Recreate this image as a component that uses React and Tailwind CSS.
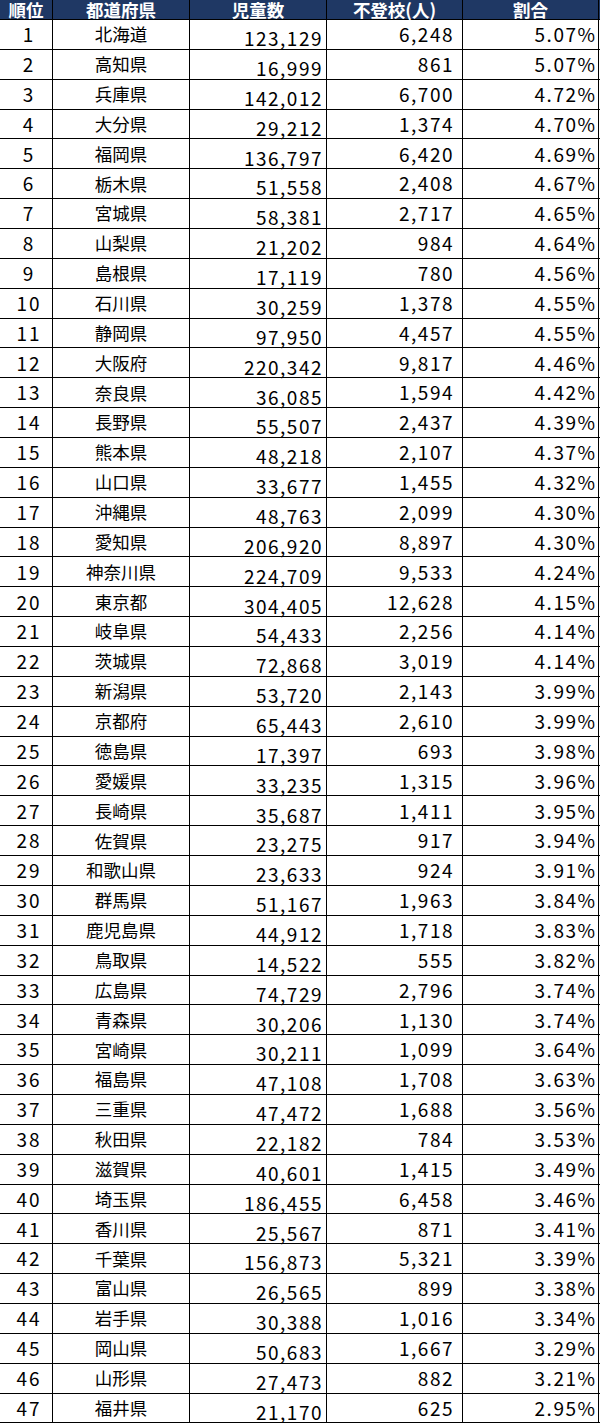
const rows = [
  ["1", "北海道", "123,129", "6,248", "5.07%"],
  ["2", "高知県", "16,999", "861", "5.07%"],
  ["3", "兵庫県", "142,012", "6,700", "4.72%"],
  ["4", "大分県", "29,212", "1,374", "4.70%"],
  ["5", "福岡県", "136,797", "6,420", "4.69%"],
  ["6", "栃木県", "51,558", "2,408", "4.67%"],
  ["7", "宮城県", "58,381", "2,717", "4.65%"],
  ["8", "山梨県", "21,202", "984", "4.64%"],
  ["9", "島根県", "17,119", "780", "4.56%"],
  ["10", "石川県", "30,259", "1,378", "4.55%"],
  ["11", "静岡県", "97,950", "4,457", "4.55%"],
  ["12", "大阪府", "220,342", "9,817", "4.46%"],
  ["13", "奈良県", "36,085", "1,594", "4.42%"],
  ["14", "長野県", "55,507", "2,437", "4.39%"],
  ["15", "熊本県", "48,218", "2,107", "4.37%"],
  ["16", "山口県", "33,677", "1,455", "4.32%"],
  ["17", "沖縄県", "48,763", "2,099", "4.30%"],
  ["18", "愛知県", "206,920", "8,897", "4.30%"],
  ["19", "神奈川県", "224,709", "9,533", "4.24%"],
  ["20", "東京都", "304,405", "12,628", "4.15%"],
  ["21", "岐阜県", "54,433", "2,256", "4.14%"],
  ["22", "茨城県", "72,868", "3,019", "4.14%"],
  ["23", "新潟県", "53,720", "2,143", "3.99%"],
  ["24", "京都府", "65,443", "2,610", "3.99%"],
  ["25", "徳島県", "17,397", "693", "3.98%"],
  ["26", "愛媛県", "33,235", "1,315", "3.96%"],
  ["27", "長崎県", "35,687", "1,411", "3.95%"],
  ["28", "佐賀県", "23,275", "917", "3.94%"],
  ["29", "和歌山県", "23,633", "924", "3.91%"],
  ["30", "群馬県", "51,167", "1,963", "3.84%"],
  ["31", "鹿児島県", "44,912", "1,718", "3.83%"],
  ["32", "鳥取県", "14,522", "555", "3.82%"],
  ["33", "広島県", "74,729", "2,796", "3.74%"],
  ["34", "青森県", "30,206", "1,130", "3.74%"],
  ["35", "宮崎県", "30,211", "1,099", "3.64%"],
  ["36", "福島県", "47,108", "1,708", "3.63%"],
  ["37", "三重県", "47,472", "1,688", "3.56%"],
  ["38", "秋田県", "22,182", "784", "3.53%"],
  ["39", "滋賀県", "40,601", "1,415", "3.49%"],
  ["40", "埼玉県", "186,455", "6,458", "3.46%"],
  ["41", "香川県", "25,567", "871", "3.41%"],
  ["42", "千葉県", "156,873", "5,321", "3.39%"],
  ["43", "富山県", "26,565", "899", "3.38%"],
  ["44", "岩手県", "30,388", "1,016", "3.34%"],
  ["45", "岡山県", "50,683", "1,667", "3.29%"],
  ["46", "山形県", "27,473", "882", "3.21%"],
  ["47", "福井県", "21,170", "625", "2.95%"],
];

const font = "font-['Noto_Sans_CJK_JP','Noto_Sans',sans-serif]";

const App = () => {
  return (
    <div className={`w-[600px] bg-white text-black ${font}`}>
      {/* Header */}
      <div className="flex h-[20px] border-b border-black bg-[#1f3864] text-[17.5px] font-bold leading-[19px] text-white">
        <div className="w-[53px] border-r border-black pb-[1px] text-center">順位</div>
        <div className="w-[137px] border-r border-black pb-[1px] text-center">都道府県</div>
        <div className="w-[137px] border-r border-black pb-[1px] text-center">児童数</div>
        <div className="w-[136px] border-r border-black pb-[1px] text-center">不登校(人)</div>
        <div className="w-[136px] border-r border-black pb-[1px] text-center">割合</div>
      </div>

      {/* Rows */}
      {rows.map(([rank, pref, kids, absent, rate]) => (
        <div key={rank} className="flex h-[29.87px] border-b border-black">
          <div className="flex w-[53px] items-center justify-center border-r border-black pl-[6px] text-[19px] tracking-[2px]">
            {rank}
          </div>
          <div className="flex w-[137px] items-center justify-center border-r border-black text-[17.5px]">
            {pref}
          </div>
          <div className="flex w-[137px] items-center justify-end border-r border-black pt-[8px] pr-[3px] text-[19px] tracking-[1.5px]">
            {kids}
          </div>
          <div className="flex w-[136px] items-center justify-end border-r border-black pr-[8px] text-[19px] tracking-[1.5px]">
            {absent}
          </div>
          <div className="flex w-[136px] items-center justify-end border-r border-black pr-[1.5px] text-[19px] tracking-[1.5px]">
            {rate}
          </div>
        </div>
      ))}
    </div>
  );
};

export default App;
